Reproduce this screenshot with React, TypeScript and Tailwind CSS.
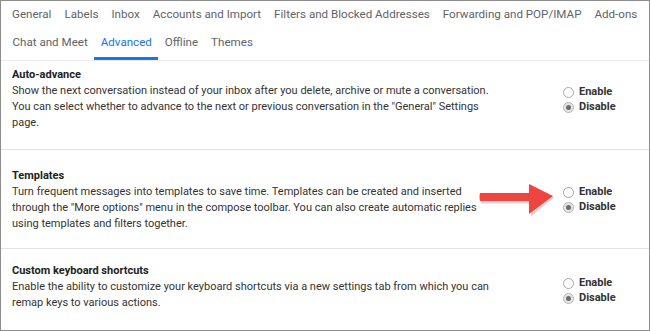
import React from "react";

const tabs1 = ["General", "Labels", "Inbox", "Accounts and Import", "Filters and Blocked Addresses", "Forwarding and POP/IMAP", "Add-ons"];
const tabs2 = ["Chat and Meet", "Advanced", "Offline", "Themes"];

function Radio({ checked, label }: { checked?: boolean; label: string }) {
  return (
    <div className="flex items-center gap-[5px] h-[15px]">
      {checked ? (
        <span className="w-[11px] h-[11px] rounded-full border border-[#b5b5b5] bg-[#e6e6e6] flex items-center justify-center">
          <span className="w-[5px] h-[5px] rounded-full bg-[#6b6b6b]" />
        </span>
      ) : (
        <span className="w-[11px] h-[11px] rounded-full border border-[#a8a8a8] bg-white" />
      )}
      <span className="text-[11px] font-bold text-[#333]">{label}</span>
    </div>
  );
}

function Section({ title, lines, pt, pb, rmt, border }: { title: string; lines: string[]; pt: string; pb: string; rmt: string; border?: boolean }) {
  return (
    <div className={`flex items-center pl-[11px] ${pt} ${pb} ${border ? "border-b border-[#e3e3e3]" : ""}`}>
      <div className="w-[551px]">
        <div className="text-[11px] font-bold text-[#222] leading-[16px]">{title}</div>
        {lines.map((l, i) => (
          <div key={i} className="text-[11px] text-[#333] leading-[16px] whitespace-nowrap">{l}</div>
        ))}
      </div>
      <div className={`flex flex-col ${rmt}`}>
        <Radio label="Enable" />
        <Radio checked label="Disable" />
      </div>
    </div>
  );
}

export default function App() {
  return (
    <div className="w-[650px] h-[331px] border border-[#8c8c8c] bg-white relative overflow-hidden" style={{ fontFamily: "Roboto, Arial, sans-serif" }}>
      <div className="flex gap-[13px] pl-[11px] h-[27px] items-center text-[11.6px] text-[#5f6368] whitespace-nowrap">
        {tabs1.map((t) => (
          <span key={t}>{t}</span>
        ))}
      </div>
      <div className="flex pl-[5px] h-[33px] items-stretch text-[11.6px] text-[#5f6368] border-b border-[#ececec] whitespace-nowrap">
        {tabs2.map((t) => (
          <div
            key={t}
            className={`px-[6.5px] flex items-center pt-[1px] border-b-[3px] ${t === "Advanced" ? "border-[#1a73e8] text-[#1a73e8]" : "border-transparent"}`}
          >
            {t}
          </div>
        ))}
      </div>
      <Section
        title="Auto-advance"
        lines={[
          "Show the next conversation instead of your inbox after you delete, archive or mute a conversation.",
          "You can select whether to advance to the next or previous conversation in the \"General\" Settings",
          "page.",
        ]}
        pt="pt-[6px]"
        pb="pb-[18px]"
        rmt="mt-[2px]"
        border
      />
      <Section
        title="Templates"
        lines={[
          "Turn frequent messages into templates to save time. Templates can be created and inserted",
          "through the \"More options\" menu in the compose toolbar. You can also create automatic replies",
          "using templates and filters together.",
        ]}
        pt="pt-[18px]"
        pb="pb-[16px]"
        rmt="mt-0"
        border
      />
      <Section
        title="Custom keyboard shortcuts"
        lines={[
          "Enable the ability to customize your keyboard shortcuts via a new settings tab from which you can",
          "remap keys to various actions.",
        ]}
        pt="pt-[14px]"
        pb="pb-[21px]"
        rmt="mt-[7px]"
      />
      <svg className="absolute left-[476px] top-[181px]" width="80" height="38" viewBox="0 0 80 38">
        <path d="M3 12 L53 12 L53 2 L76 14 L53 33 L53 20 L3 20 Z" fill="#b03030" opacity="0.25" transform="translate(1,1.5)" />
        <path d="M3 11 Q2 15 3 19 L52 19 L52 32 L76 14 L52 2 L52 11 Z" fill="#ee4540" />
      </svg>
    </div>
  );
}
